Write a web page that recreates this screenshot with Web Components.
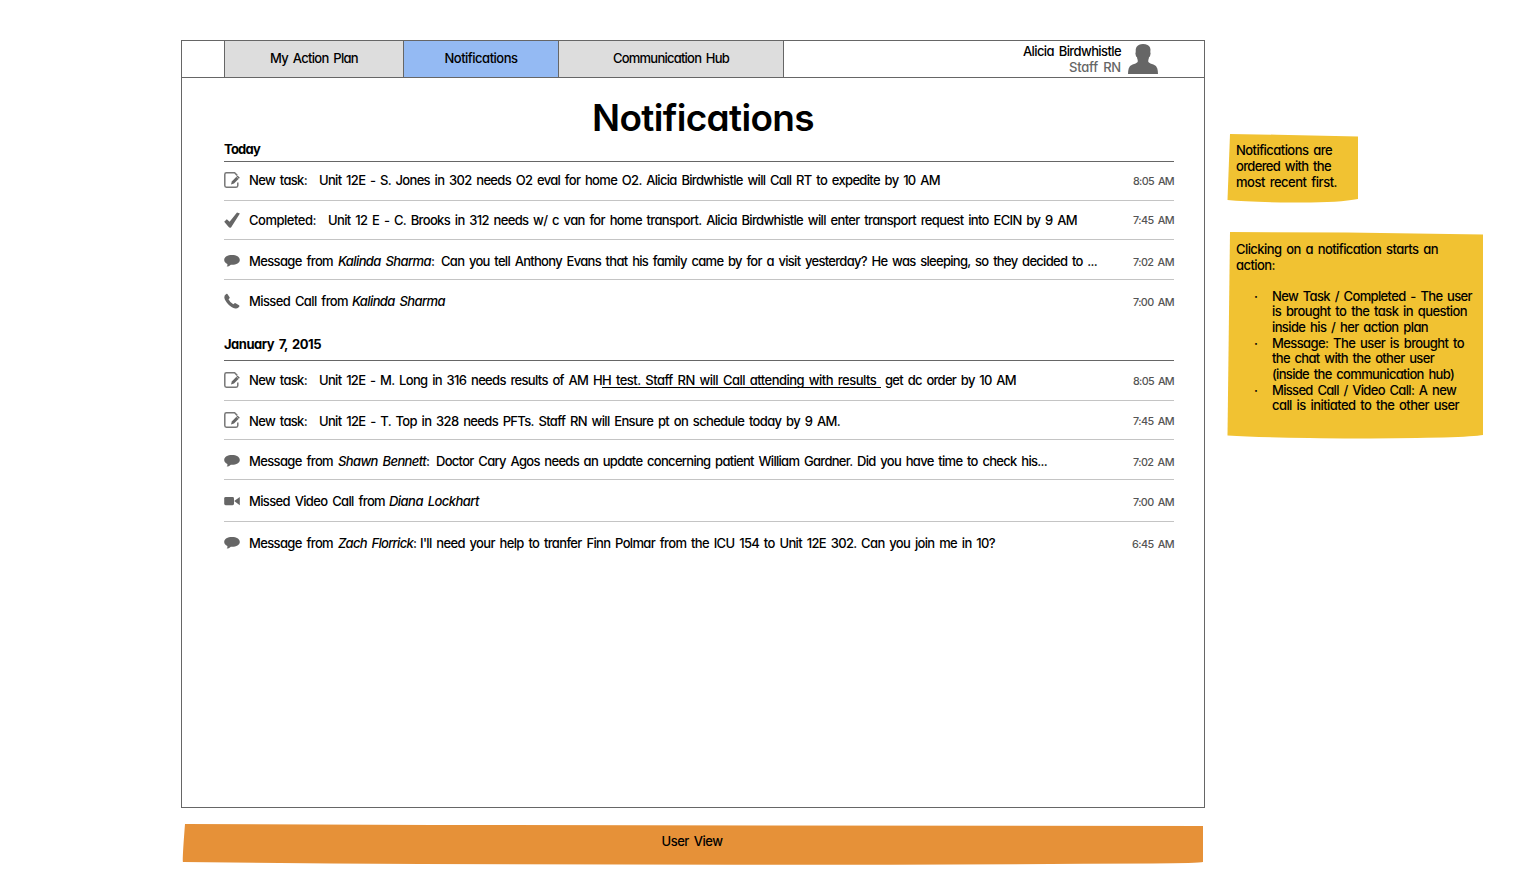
<!DOCTYPE html>
<html lang="en"><head><meta charset="utf-8"><title>Notifications</title>
<style>
body{margin:0;background:#fff;color:#000;font:500 13px/16px Inter,"Open Sans",sans-serif;word-spacing:1.9px;font-feature-settings:"cv11","calt" 0;width:1514px;height:875px;overflow:hidden}
</style></head><body>
<wire-board>
 <app-frame>
  <tab-bar slot="head">
   <tab-item style="width:178px"><fit-text w="88">My Action Plan</fit-text></tab-item>
   <tab-item active style="width:154px"><fit-text w="73">Notifications</fit-text></tab-item>
   <tab-item style="width:224px"><fit-text w="116">Communication Hub</fit-text></tab-item>
   <user-badge slot="user"><fit-text w="98">Alicia Birdwhistle</fit-text><fit-text slot="role" w="52">Staff RN</fit-text></user-badge>
  </tab-bar>
  <page-title><fit-text w="222">Notifications</fit-text></page-title>
  <day-group>
   <fit-text slot="day" w="36">Today</fit-text>
   <note-row icon="task" time="8:05 AM" tw="41" style="--h:38px;--p:10px"><fit-text w="58" gap="12">New task:</fit-text><fit-text w="621">Unit 12E - S. Jones in 302 needs O2 eval for home O2. Alicia Birdwhistle will Call RT to expedite by 10 AM</fit-text></note-row>
   <note-row icon="check" time="7:45 AM" tw="41" style="--h:38px;--p:11px;--tp:11px"><fit-text w="67" gap="12">Completed:</fit-text><fit-text w="749">Unit 12 E - C. Brooks in 312 needs w/ c van for home transport. Alicia Birdwhistle will enter transport request into ECIN by 9 AM</fit-text></note-row>
   <note-row icon="chat" time="7:02 AM" tw="41" style="--h:39px;--p:13px"><fit-text w="84" gap="5">Message from</fit-text><fit-text i w="93">Kalinda Sharma</fit-text><fit-text w="3" gap="7">:</fit-text><fit-text w="656">Can you tell Anthony Evans that his family came by for a visit yesterday? He was sleeping, so they decided to ...</fit-text></note-row>
   <note-row last icon="phone" time="7:00 AM" tw="41" style="--h:56px;--p:13px"><fit-text w="99" gap="4">Missed Call from</fit-text><fit-text i w="93">Kalinda Sharma</fit-text></note-row>
  </day-group>
  <day-group style="--dh:24px">
   <fit-text slot="day" w="97">January 7, 2015</fit-text>
   <note-row icon="task" time="8:05 AM" tw="41" style="--h:39px;--p:11px"><fit-text w="58" gap="12">New task:</fit-text><fit-text w="283">Unit 12E - M. Long in 316 needs results of AM H</fit-text><fit-text u w="279" gap="4">H test. Staff RN will Call attending with results </fit-text><fit-text w="131">get dc order by 10 AM</fit-text></note-row>
   <note-row icon="task" time="7:45 AM" tw="41" style="--h:38px;--p:12px;--ip:11px;--tp:12px"><fit-text w="58" gap="12">New task:</fit-text><fit-text w="521">Unit 12E - T. Top in 328 needs PFTs. Staff RN will Ensure pt on schedule today by 9 AM.</fit-text></note-row>
   <note-row icon="chat" time="7:02 AM" tw="41" style="--h:39px;--p:13px"><fit-text w="84" gap="5">Message from</fit-text><fit-text i w="88">Shawn Bennett</fit-text><fit-text w="3" gap="7">:</fit-text><fit-text w="611">Doctor Cary Agos needs an update concerning patient William Gardner. Did you have time to check his...</fit-text></note-row>
   <note-row icon="video" time="7:00 AM" tw="41" style="--h:41px;--p:13px"><fit-text w="136" gap="4">Missed Video Call from</fit-text><fit-text i w="90">Diana Lockhart</fit-text></note-row>
   <note-row last icon="chat" time="6:45 AM" tw="42" style="--h:40px;--p:13px"><fit-text w="84" gap="5">Message from</fit-text><fit-text i w="75">Zach Florrick</fit-text><fit-text w="3" gap="4">:</fit-text><fit-text w="575">I'll need your help to tranfer Finn Polmar from the ICU 154 to Unit 12E 302. Can you join me in 10?</fit-text></note-row>
  </day-group>
 </app-frame>
 <paper-note slot="foot" style="--w:1022px;--hh:41px;--bg:#e69138;--clip:path('M3 0L250 1L1021 2L1021 38Q1017 39 970 39.5Q550 42 150 39.5L1 38Q0 38 3 0Z');margin:16px 0 0 1px;text-align:center"><div style="padding:9px 2px 0 0"><fit-text w="61">User View</fit-text></div></paper-note>
 <paper-note slot="side" style="--w:132px;--hh:69px;--bg:#f1c232;--clip:path('M3 0L50 0.7L131 2.5L131 65Q110 69 65 68.5Q20 68 .5 66Z');margin-top:134px"><div style="padding:8px 0 0 9px">
  <fit-text w="96">Notifications are</fit-text><br><fit-text w="95">ordered with the</fit-text><br><fit-text w="101">most recent first.</fit-text></div></paper-note>
 <paper-note slot="side" style="--w:257px;--hh:207px;--bg:#f1c232;--clip:path('M3 0L120 .5L256 2.5L256 203Q240 206 130 206.5Q40 206 .5 203.5Z');margin-top:29px"><div style="padding:9px 0 0 9px">
  <fit-text w="202">Clicking on a notification starts an</fit-text><br><fit-text w="39">action:</fit-text></div>
  <bullet-list>
   <bullet-item><fit-text w="200">New Task / Completed - The user</fit-text><fit-text w="195">is brought to the task in question</fit-text><fit-text w="156">inside his / her action plan</fit-text></bullet-item>
   <bullet-item><fit-text w="192">Message: The user is brought to</fit-text><fit-text w="162">the chat with the other user</fit-text><fit-text w="182">(inside the communication hub)</fit-text></bullet-item>
   <bullet-item><fit-text w="184">Missed Call / Video Call: A new</fit-text><fit-text w="187">call is initiated to the other user</fit-text></bullet-item>
  </bullet-list></paper-note>
</wire-board>
<script>
const ICONS={
task:'<path d="M13.8 10.6V13.6Q13.8 15.2 12.2 15.2H2.4Q.8 15.2 .8 13.6V2.4Q.8.8 2.4.8H10.6L13.2 3.4" fill="none" stroke="#777" stroke-width="1.5"/><path d="M7 12.4L7.8 9.4L13.6 3.6L15.8 5.8L10 11.6Z" fill="#666"/><path d="M12.2 4.4L14.7 6.9" stroke="#fff" stroke-width=".6"/>',
check:'<path d="M.2 9.7L2.8 7.2L5.6 9.8L13 .6L15.9 1.5L7.2 15.2Q5.8 16.4 4.7 15Z" fill="#666"/>',
chat:'<path d="M8 2C12.4 2 15.8 4 15.8 6.9S12.4 11.8 8 11.8L6.8 11.7Q4.8 13.7 2.7 13.6Q3.7 12.4 3.4 10.9C1.4 10 .2 8.5.2 6.9C.2 4 3.6 2 8 2Z" fill="#666"/>',
phone:'<path d="M3.4 1.1L5.6 4.3Q6 5 5.3 5.6L4.5 6.3Q6 9.4 9.3 11.3L10.3 10.4Q10.8 9.9 11.6 10.3L15 12.2Q15.9 12.7 15.2 13.8Q13.8 16 11.3 15.5C6.3 14.6.9 8.7.3 4.5Q.1 2.2 2.2 1.1Q3 .6 3.4 1.1Z" fill="#666"/>',
video:'<rect x=".2" y="4" width="9.8" height="8.2" rx="1.4" fill="#666"/><path d="M10.2 8.1L15.8 4V12.2Z" fill="#666"/>'};
function define(name,html,setup){
 const t=document.createElement('template');t.innerHTML=html;
 customElements.define(name,class extends HTMLElement{
  constructor(){super();this.attachShadow({mode:'open'}).append(t.content.cloneNode(true));}
  connectedCallback(){if(setup)setup(this,this.shadowRoot);}
 });
}
define('wire-board','<style>:host{display:flex;align-items:flex-start;padding-left:181px}.main{padding-top:40px;width:1024px}.side{padding-left:22px;width:260px}</style><div class="main"><slot></slot><slot name="foot"></slot></div><div class="side"><slot name="side"></slot></div>');
define('app-frame','<style>:host{display:block;box-sizing:border-box;width:1024px;height:768px;border:1px solid #666}.body{padding:0 30px 0 42px}</style><slot name="head"></slot><div class="body"><slot></slot></div>');
define('tab-bar','<style>:host{display:flex;height:36px;border-bottom:1px solid #666;padding-left:42px}.tabs{display:flex;border-left:1px solid #666}.user{margin-left:auto}</style><div class="tabs"><slot></slot></div><div class="user"><slot name="user"></slot></div>');
define('tab-item','<style>:host{display:flex;align-items:center;justify-content:center;box-sizing:content-box;height:34px;padding-bottom:2px;background:#ddd;border-right:1px solid #666}:host([active]){background:#94baf3}</style><slot></slot>');
define('user-badge','<style>:host{display:flex;gap:7px;padding:2px 46px 0 0}.names{display:flex;flex-direction:column;align-items:flex-end}.role{color:#666;display:flex}svg{margin-top:1px}</style><div class="names"><slot></slot><span class="role"><slot name="role"></slot></span></div><svg width="30" height="30" viewBox="0 0 30 30"><path fill="#666" d="M15 0Q20.5 0 22 3.5Q22.8 5 22.3 8.2Q23 8.8 22.2 11.4Q21.8 13 21 13.2Q20.8 15 20.3 16V18Q22 19.6 25.4 20.6Q28.6 21.6 29.3 24.5Q30 27 30 30H0Q0 27 .7 24.5Q1.4 21.6 4.6 20.6Q8 19.6 9.7 18V16Q9.2 15 9 13.2Q8.2 13 7.8 11.4Q7 8.8 7.7 8.2Q7.2 5 8.5 3Q10.6 0 15 0Z"/></svg>');
define('page-title','<style>:host{display:block;text-align:center;font-size:37px;font-weight:600;line-height:46px;height:63px}div{padding:17px 0 0 8px}</style><div><slot></slot></div>');
define('day-group','<style>:host{display:block}.day{font-weight:700;height:var(--dh,20px);border-bottom:1px solid #666}</style><div class="day"><slot name="day"></slot></div><slot></slot>');
define('note-row','<style>:host{display:flex;align-items:flex-start;height:var(--h);border-bottom:1px solid #c4c4c4}:host([last]){border:0}svg{flex:none;width:16px;height:16px;margin:var(--ip,var(--p)) 9px 0 0}.text{display:flex;padding-top:var(--p)}.time{margin-left:auto;padding-top:var(--tp,calc(var(--p) + 1px));font-size:10.8px;line-height:18px;color:#555}</style><svg viewBox="0 0 16 16"></svg><div class="text"><slot></slot></div><div class="time"><fit-text></fit-text></div>',
 (el,r)=>{r.querySelector('svg').innerHTML=ICONS[el.getAttribute('icon')];const t=r.querySelector('fit-text');t.textContent=el.getAttribute('time');t.setAttribute('w',el.getAttribute('tw'));});
define('paper-note','<style>:host{display:block;width:var(--w);height:var(--hh);background:var(--bg);clip-path:var(--clip)}</style><slot></slot>');
define('bullet-list','<style>:host{display:block;padding:15.6px 0 0 27px}</style><slot></slot>');
define('bullet-item','<style>:host{display:flex;line-height:15.67px}.dot{width:18px;flex:none}.lines{display:flex;flex-direction:column}</style><span class="dot">·</span><div class="lines"><slot></slot></div>');
/* Spreads a run of text over the width in its w attribute. */
define('fit-text','<style>:host{display:inline-block;white-space:pre;vertical-align:top}:host([i]) span{font-style:italic}:host([u]) span{border-bottom:1px solid #000;display:inline-block;height:15px}</style><span><slot></slot></span>',
 (el,r)=>{const w=+el.getAttribute('w');if(!w)return;const s=r.querySelector('span'),n=el.textContent.length;
  s.style.letterSpacing='0px';const natural=s.getBoundingClientRect().width;
  if(n>1)s.style.letterSpacing=((w-natural)/n)+'px';
  el.style.width=w+'px';el.style.marginRight=(+el.getAttribute('gap')||0)+'px';});
/* Widths depend on inherited fonts, so each run is measured once all elements exist. */
for(const host of document.querySelectorAll('note-row')){const t=host.shadowRoot.querySelector('fit-text');t.replaceWith(t.cloneNode(true));}
</script></body></html>
